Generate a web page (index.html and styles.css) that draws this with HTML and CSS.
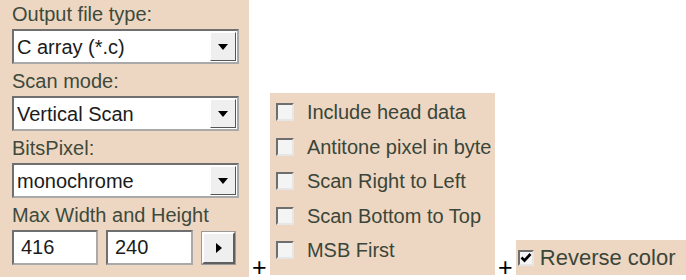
FILE: index.html
```html
<!DOCTYPE html>
<html>
<head>
<meta charset="utf-8">
<link rel="stylesheet" href="styles.css">
</head>
<body>
<div class="stage">
  <div class="panel left">
    <div class="lbl first">Output file type:</div>
    <div class="combo"><span class="val">C array (*.c)</span><span class="dd"><svg width="10" height="6" viewBox="0 0 10 6"><path d="M0 0H10L5 6Z" fill="#000"/></svg></span></div>
    <div class="lbl">Scan mode:</div>
    <div class="combo"><span class="val">Vertical Scan</span><span class="dd"><svg width="10" height="6" viewBox="0 0 10 6"><path d="M0 0H10L5 6Z" fill="#000"/></svg></span></div>
    <div class="lbl">BitsPixel:</div>
    <div class="combo"><span class="val">monochrome</span><span class="dd"><svg width="10" height="6" viewBox="0 0 10 6"><path d="M0 0H10L5 6Z" fill="#000"/></svg></span></div>
    <div class="lbl">Max Width and Height</div>
    <div class="sizes">
      <div class="field w1">416</div>
      <div class="field w2">240</div>
      <div class="btn"><svg width="6" height="10" viewBox="0 0 6 10"><path d="M0 0V10L6 5Z" fill="#000"/></svg></div>
    </div>
  </div>
  <div class="plus">+</div>
  <div class="panel mid">
    <div class="row"><span class="cb"></span><span class="txt">Include head data</span></div>
    <div class="row"><span class="cb"></span><span class="txt">Antitone pixel in byte</span></div>
    <div class="row"><span class="cb"></span><span class="txt">Scan Right to Left</span></div>
    <div class="row"><span class="cb"></span><span class="txt">Scan Bottom to Top</span></div>
    <div class="row"><span class="cb"></span><span class="txt">MSB First</span></div>
  </div>
  <div class="plus">+</div>
  <div class="panel right">
    <div class="row"><span class="cb checked"><svg width="12" height="11" viewBox="0 0 12 11"><path d="M1.5 5.5L4.5 8.5L10.5 2" fill="none" stroke="#000" stroke-width="2.6"/></svg></span><span class="txt">Reverse color</span></div>
  </div>
</div>
</body>
</html>
```
FILE: styles.css
```css
html, body {
  margin: 0;
  padding: 0;
  background: #ffffff;
}
body {
  font-family: "Liberation Sans", Arial, sans-serif;
  font-size: 20px;
}
.stage {
  display: flex;
  align-items: flex-start;
  width: 686px;
  height: 280px;
}
.panel {
  background: #eed7c2;
  box-sizing: border-box;
}
.left {
  width: 250px;
  height: 277px;
  padding: 0 10px 0 12px;
}
.lbl {
  color: #3d4a3c;
  line-height: 22px;
  height: 22px;
  margin-top: 6px;
  margin-bottom: 4px;
  white-space: nowrap;
}
.lbl.first {
  margin-top: 3px;
}
.combo {
  display: flex;
  align-items: center;
  justify-content: space-between;
  height: 35px;
  box-sizing: border-box;
  background: #ffffff;
  border: 2px solid;
  border-color: #6f6f6f #a9a9a9 #a9a9a9 #6f6f6f;
  padding: 0 1px 0 3px;
}
.val {
  color: #1b1b1b;
  line-height: 22px;
  padding-top: 1px;
}
.dd {
  width: 26px;
  height: 29px;
  box-sizing: border-box;
  background: #efefef;
  border: 1px solid;
  border-color: #ffffff #555555 #555555 #ffffff;
  display: flex;
  align-items: center;
  justify-content: center;
}
.sizes {
  display: flex;
  align-items: center;
  gap: 8px;
}
.field {
  height: 35px;
  box-sizing: border-box;
  background: #ffffff;
  border: 2px solid;
  border-color: #6f6f6f #a9a9a9 #a9a9a9 #6f6f6f;
  color: #1b1b1b;
  line-height: 30px;
  padding-left: 7px;
}
.w1 { width: 86px; }
.w2 { width: 87px; }
.btn {
  width: 33px;
  height: 32px;
  margin-left: 1px;
  box-sizing: border-box;
  background: #efefef;
  border: 2px solid;
  border-color: #ffffff #5f5f5f #5f5f5f #ffffff;
  outline: 1px solid #9a9a9a;
  display: flex;
  align-items: center;
  justify-content: center;
}
.plus {
  align-self: flex-end;
  font-size: 25px;
  line-height: 26px;
  height: 26px;
  color: #000;
  width: 21px;
  text-align: center;
  margin-bottom: 0;
}
.mid {
  margin-top: 93px;
  width: 226px;
  height: 182px;
  padding: 2px 0 0 6px;
}
.row {
  display: flex;
  align-items: center;
  height: 34.5px;
}
.cb {
  width: 18px;
  height: 18px;
  box-sizing: border-box;
  background: #f4f4f4;
  border: 2px solid;
  border-color: #6e6e6e #e6e6e6 #e6e6e6 #6e6e6e;
  margin-right: 13px;
  display: flex;
  align-items: center;
  justify-content: center;
}
.txt {
  color: #3a4639;
  white-space: nowrap;
  line-height: 22px;
}
.right {
  margin-top: 240px;
  width: 171px;
  height: 35px;
  padding: 0 0 0 2px;
  font-size: 22px;
}
.right .row {
  height: 35px;
}
.right .cb {
  width: 16px;
  height: 16px;
  margin-right: 6px;
}
```
